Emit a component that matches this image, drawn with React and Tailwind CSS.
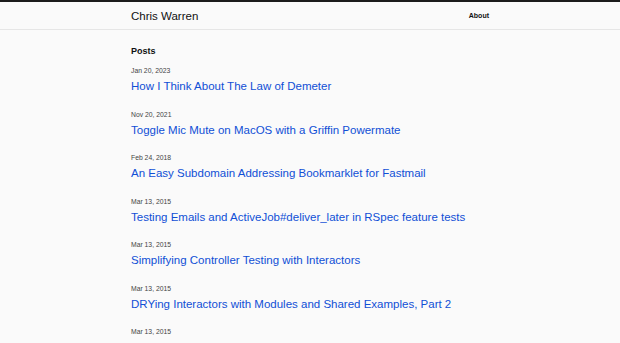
export default function App() {
  const posts = [
    ["Jan 20, 2023", "How I Think About The Law of Demeter"],
    ["Nov 20, 2021", "Toggle Mic Mute on MacOS with a Griffin Powermate"],
    ["Feb 24, 2018", "An Easy Subdomain Addressing Bookmarklet for Fastmail"],
    ["Mar 13, 2015", "Testing Emails and ActiveJob#deliver_later in RSpec feature tests"],
    ["Mar 13, 2015", "Simplifying Controller Testing with Interactors"],
    ["Mar 13, 2015", "DRYing Interactors with Modules and Shared Examples, Part 2"],
    ["Mar 13, 2015", null],
  ];
  return (
    <div className="h-[343px] bg-[#fafafa] text-[#111] overflow-hidden" style={{ fontFamily: '"Liberation Sans", Arial, sans-serif' }}>
      <header className="border-t-2 border-[#1c1c1c] border-b border-b-[#e6e6e6] bg-[#fafafa]">
        <div className="mx-auto w-[358px] h-[27px] flex items-center justify-between">
          <span className="text-[11.5px] leading-[14px] text-[#111]">Chris Warren</span>
          <span className="text-[7px] leading-[10px] font-bold">About</span>
        </div>
      </header>
      <main className="mx-auto w-[358px] pt-[14px]">
        <h2 className="text-[9px] leading-[14px] font-bold mb-[8px]">Posts</h2>
        <ul className="flex flex-col gap-[15.5px]">
          {posts.map(([d, t], i) => (
            <li key={i} className="flex flex-col gap-[2px] whitespace-nowrap">
              <span className="text-[6.8px] leading-[10px] text-[#444]">{d}</span>
              {t && <a className="text-[11.5px] leading-[16px] text-[#104fd6]">{t}</a>}
            </li>
          ))}
        </ul>
      </main>
    </div>
  );
}
